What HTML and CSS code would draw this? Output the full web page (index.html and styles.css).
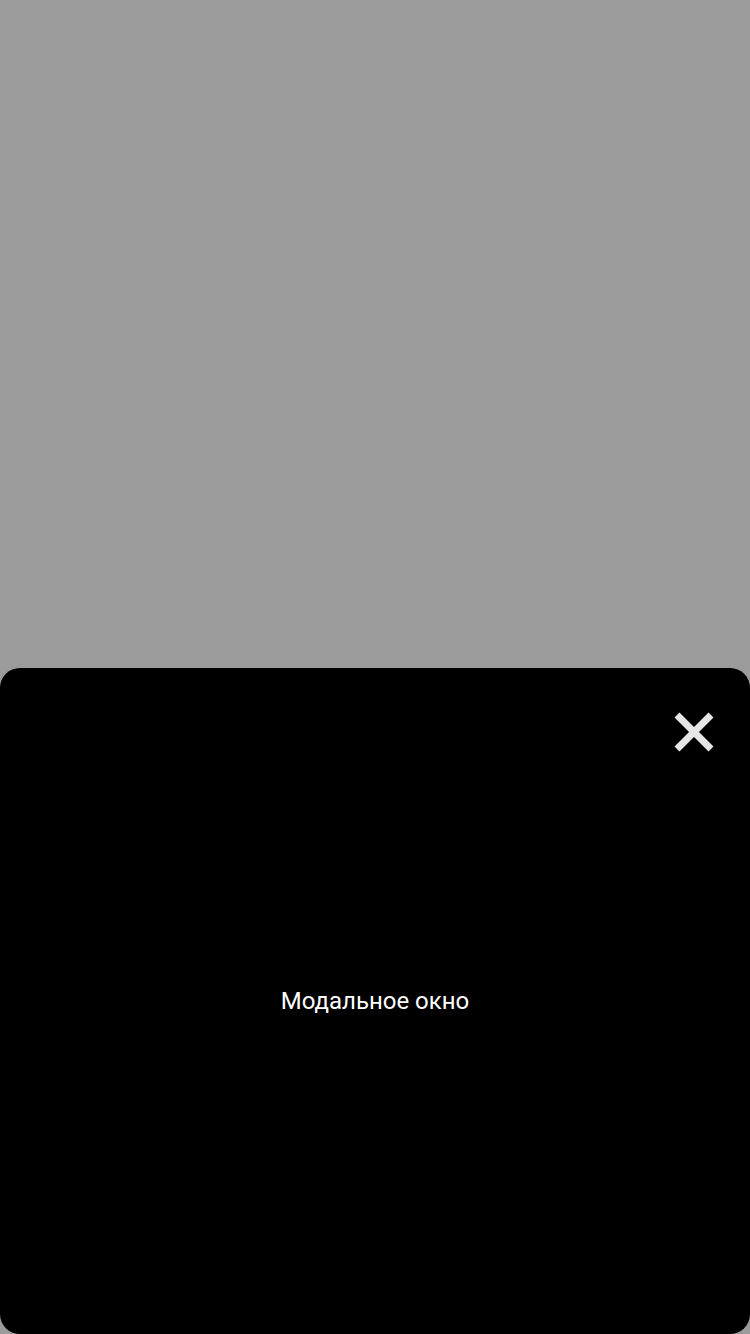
FILE: index.html
```html
<!DOCTYPE html>
<html lang="ru">
<head>
<meta charset="utf-8">
<link rel="stylesheet" href="styles.css">
</head>
<body>
<div class="screen">
  <div class="backdrop"></div>
  <div class="modal">
    <button class="close" aria-label="Закрыть">
      <svg width="40" height="40" viewBox="0 0 40 40"><path d="M3 3L37 37M37 3L3 37" stroke="#e6e6e6" stroke-width="7" stroke-linecap="butt"/></svg>
    </button>
    <p class="title">Модальное окно</p>
  </div>
</div>
</body>
</html>
```
FILE: styles.css
```css
html, body { margin: 0; padding: 0; }
body { background: #9b9b9b; font-family: Roboto, "Noto Sans", sans-serif; }
.screen { width: 750px; height: 1334px; display: flex; flex-direction: column; }
.backdrop { flex: 1; }
.modal {
  position: relative;
  height: 666px;
  background: #000;
  border-radius: 20px;
  display: flex;
  align-items: center;
  justify-content: center;
}
.close {
  position: absolute;
  top: 44px;
  right: 36px;
  width: 40px;
  height: 40px;
  padding: 0;
  border: 0;
  background: none;
  display: flex;
}
.title { margin: 0; color: #fff; font-size: 24px; line-height: 1; }
```
